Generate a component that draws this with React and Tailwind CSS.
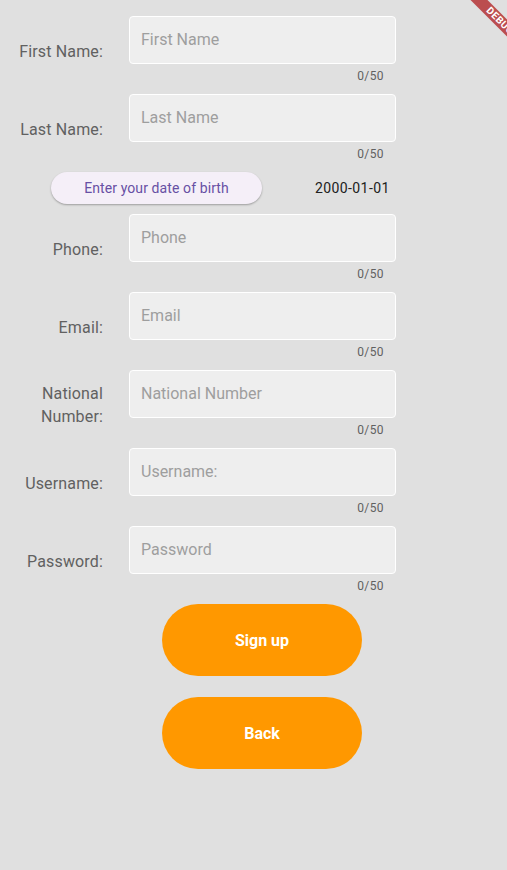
import React from 'react';

const fields = [
  { label: 'First Name:', hint: 'First Name' },
  { label: 'Last Name:', hint: 'Last Name' },
  { date: true },
  { label: 'Phone:', hint: 'Phone' },
  { label: 'Email:', hint: 'Email' },
  { label: 'National Number:', hint: 'National Number' },
  { label: 'Username:', hint: 'Username:' },
  { label: 'Password:', hint: 'Password' },
];

function Field({ label, hint }) {
  return (
    <div className="flex items-center mb-[8px]">
      <div className="w-[95px] ml-[8px] text-right text-[16px] leading-[23px] tracking-[0.15px] text-[#616161]">{label}</div>
      <div className="ml-[26px] w-[267px]">
        <div className="h-[48px] rounded-[4px] border border-white bg-[#eeeeee] flex items-center pl-[11px] text-[16px] text-[#9e9e9e]">
          {hint}
        </div>
        <div className="h-[22px] pt-[4px] pr-[12px] text-right text-[12px] leading-4 text-[#616161] tracking-[0.4px]">0/50</div>
      </div>
    </div>
  );
}

export default function App() {
  return (
    <div className="relative min-h-screen h-[870px] overflow-hidden bg-[#e0e0e0] pt-[16px]" style={{ fontFamily: 'Roboto, "Liberation Sans", sans-serif' }}>
      {fields.map((f, i) =>
        f.date ? (
          <div key={i} className="flex items-center h-[32px] mb-[10px]">
            <button className="ml-[51px] w-[211px] h-[32px] rounded-full bg-[#f5eff8] text-[14px] tracking-[0.1px] text-[#6750a4] shadow-[0_1px_2px_rgba(0,0,0,0.3)]">
              Enter your date of birth
            </button>
            <span className="ml-[53px] text-[14px] tracking-[0.4px] text-[#212121]">2000-01-01</span>
          </div>
        ) : (
          <Field key={i} label={f.label} hint={f.hint} />
        )
      )}
      <button className="ml-[162px] w-[200px] h-[72px] rounded-full bg-[#ff9800] text-white text-[16px] font-bold block pt-[1px]">Sign up</button>
      <button className="ml-[162px] mt-[21px] w-[200px] h-[72px] rounded-full bg-[#ff9800] text-white text-[16px] font-bold block pt-[1px]">Back</button>

      <div className="absolute left-[460px] top-[15px] w-[80px] h-[12px] rotate-45 bg-[#bb4d4f] flex items-center justify-center text-white text-[10px] font-bold leading-none tracking-[0.5px]">
        DEBUG
      </div>
    </div>
  );
}
